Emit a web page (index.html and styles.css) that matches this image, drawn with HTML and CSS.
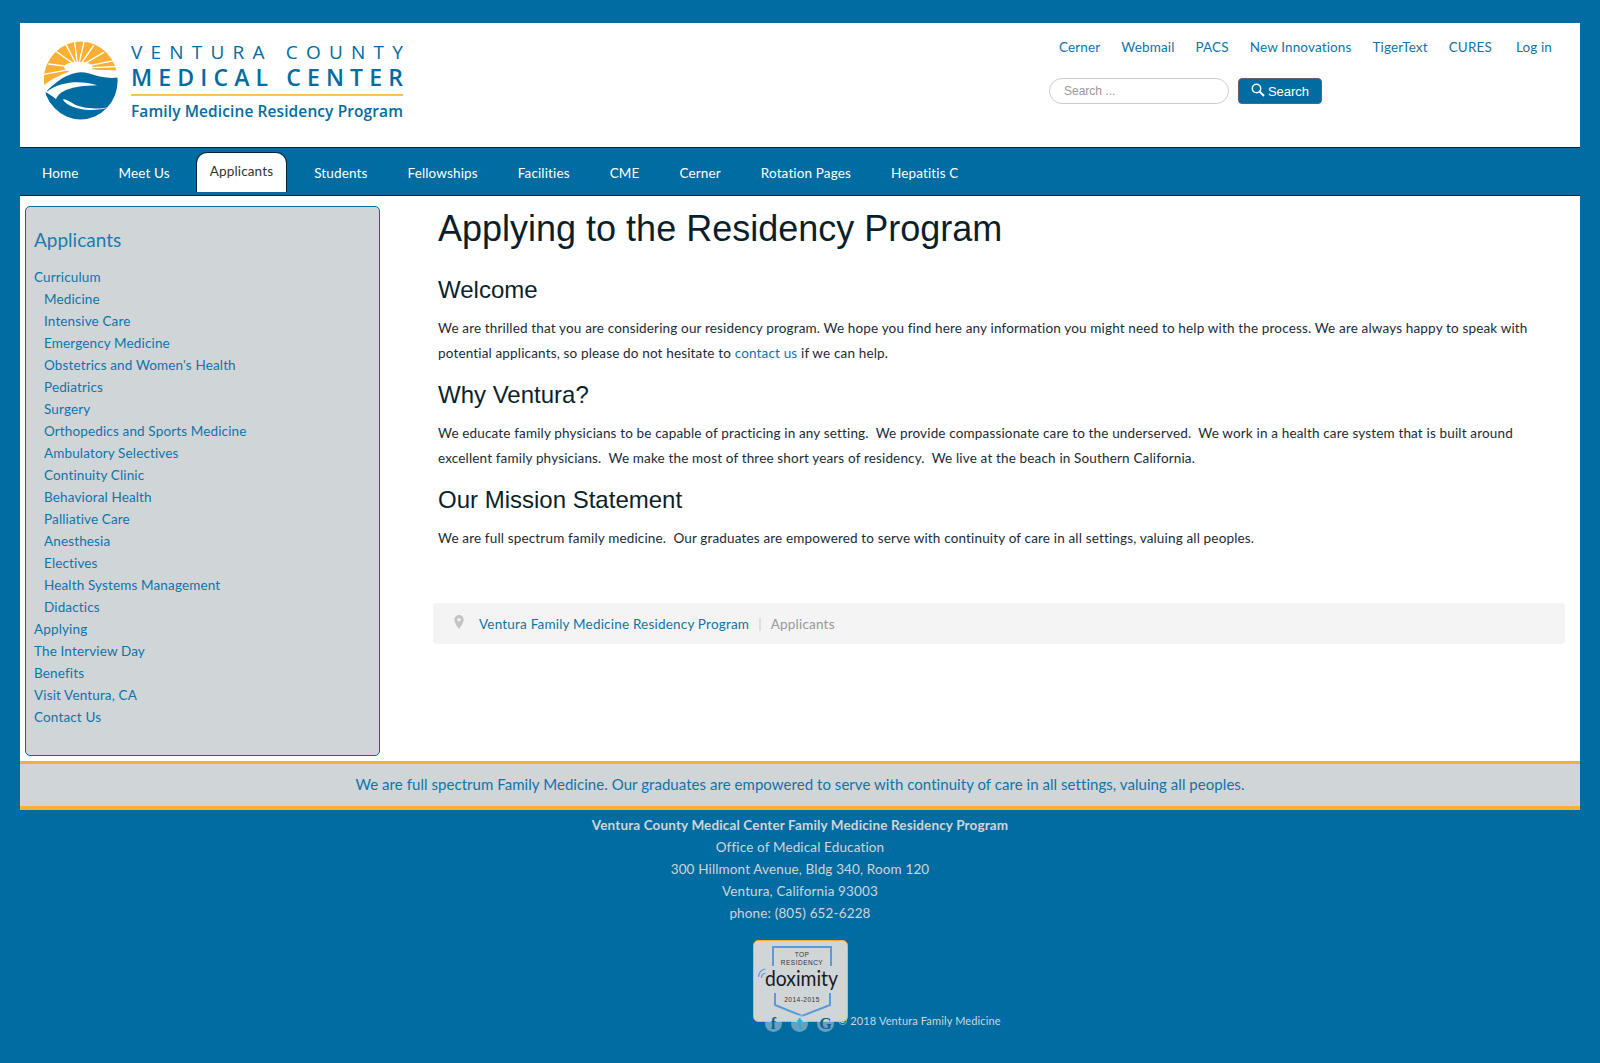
FILE: index.html
```html
<!DOCTYPE html>
<html lang="en">
<head>
<meta charset="utf-8">
<title>Applying to the Residency Program</title>
<link rel="stylesheet" href="styles.css">
</head>
<body>
<div class="wrap">
  <header class="head">
    <a class="logo" href="#">
      <svg width="366" height="84" viewBox="0 0 366 84">
        <defs><clipPath id="disc"><ellipse cx="122" cy="133.500" rx="111" ry="117"/></clipPath></defs>
        <g transform="translate(-4 -4) scale(.3333)">
          <g clip-path="url(#disc)">
            <rect width="250" height="260" fill="#fff"/>
            <path d="M0 158C30 130 60 118 90 106 110 98 130 98 150 100 180 103 210 103 240 104V0H0Z" fill="#fbb034"/>
            <g stroke="#fff" stroke-width="4" stroke-linecap="round">
              <path d="M112 92 48 46M112 92 78 26M113 92 104 18M115 92 132 18M117 92 160 30M119 92 190 50M121 94 222 74M122 96 234 92M105 94 26 84M102 98 8 116"/>
            </g>
            <ellipse cx="115" cy="94" rx="42" ry="17" fill="#fff"/>
            <path d="M14 172C48 134 88 110 122 109 162 110 178 132 240 124V260H0V172Z" fill="#016ca2"/>
            <path d="M0 160C10 166 36 176 48 190 58 166 88 150 172 148 124 134 68 134 22 166Z" fill="#fff"/>
            <path d="M0 164L48 190 40 206 0 188Z" fill="#016ca2"/>
            <path d="M68 190C84 216 142 234 216 212 172 222 122 218 98 202 88 195 78 190 68 190Z" fill="#fff"/>
          </g>
        </g>
        <text class="logo-a" x="87" y="19" textLength="272">VENTURA COUNTY</text>
        <text class="logo-b" x="87" y="46" textLength="272">MEDICAL CENTER</text>
        <rect x="87" y="54" width="272" height="2" fill="#fcc24e"/>
        <text class="logo-c" x="87" y="76.500" textLength="272" lengthAdjust="spacingAndGlyphs">Family Medicine Residency Program</text>
      </svg>
    </a>
    <div class="tools">
      <nav class="toplinks">
        <a href="#">Cerner</a><a href="#">Webmail</a><a href="#">PACS</a><a href="#">New Innovations</a><a href="#">TigerText</a><a href="#">CURES</a><a class="login" href="#">Log in</a>
      </nav>
      <form class="search">
        <input type="text" placeholder="Search ...">
        <button type="button">
          <svg width="14" height="14" viewBox="0 0 14 14" fill="none" stroke="#fff"><circle cx="5.500" cy="5.500" r="4.200" stroke-width="1.500"/><path d="M8.500 8.500 13 13" stroke-width="2"/></svg>
          Search
        </button>
      </form>
    </div>
  </header>

  <nav class="menu">
    <a href="#">Home</a>
    <a href="#">Meet Us</a>
    <a class="active" href="#">Applicants</a>
    <a href="#">Students</a>
    <a href="#">Fellowships</a>
    <a href="#">Facilities</a>
    <a href="#">CME</a>
    <a href="#">Cerner</a>
    <a href="#">Rotation Pages</a>
    <a href="#">Hepatitis C</a>
  </nav>

  <div class="main">
    <aside class="side">
      <h3>Applicants</h3>
      <ul>
        <li><a href="#">Curriculum</a>
          <ul>
            <li><a href="#">Medicine</a></li>
            <li><a href="#">Intensive Care</a></li>
            <li><a href="#">Emergency Medicine</a></li>
            <li><a href="#">Obstetrics and Women's Health</a></li>
            <li><a href="#">Pediatrics</a></li>
            <li><a href="#">Surgery</a></li>
            <li><a href="#">Orthopedics and Sports Medicine</a></li>
            <li><a href="#">Ambulatory Selectives</a></li>
            <li><a href="#">Continuity Clinic</a></li>
            <li><a href="#">Behavioral Health</a></li>
            <li><a href="#">Palliative Care</a></li>
            <li><a href="#">Anesthesia</a></li>
            <li><a href="#">Electives</a></li>
            <li><a href="#">Health Systems Management</a></li>
            <li><a href="#">Didactics</a></li>
          </ul>
        </li>
        <li><a href="#">Applying</a></li>
        <li><a href="#">The Interview Day</a></li>
        <li><a href="#">Benefits</a></li>
        <li><a href="#">Visit Ventura, CA</a></li>
        <li><a href="#">Contact Us</a></li>
      </ul>
    </aside>
    <section class="content">
      <h1>Applying to the Residency Program</h1>
      <h2>Welcome</h2>
      <p>We are thrilled that you are considering our residency program. We hope you find here any information you might need to help with the process. We are always happy to speak with potential applicants, so please do not hesitate to <a href="#">contact us</a> if we can help.</p>
      <h2>Why Ventura?</h2>
      <p>We educate family physicians to be capable of practicing in any setting.&nbsp; We provide compassionate care to the underserved.&nbsp; We work in a health care system that is built around excellent family physicians.&nbsp; We make the most of three short years of residency.&nbsp; We live at the beach in Southern California.</p>
      <h2>Our Mission Statement</h2>
      <p>We are full spectrum family medicine.&nbsp; Our graduates are empowered to serve with continuity of care in all settings, valuing all peoples.</p>
      <div class="crumbs">
        <svg width="10" height="14" viewBox="0 0 10 14"><path d="M5 0a4.700 4.700 0 0 0-4.700 4.700C.3 8 5 14 5 14s4.700-6 4.700-9.300A4.700 4.700 0 0 0 5 0Zm0 6.500a1.800 1.800 0 1 1 0-3.600 1.800 1.800 0 0 1 0 3.600Z" fill="#c4c4c4"/></svg>
        <a href="#">Ventura Family Medicine Residency Program</a>
        <span class="sep">|</span>
        <span class="here">Applicants</span>
      </div>
    </section>
  </div>

  <div class="band">We are full spectrum Family Medicine. Our graduates are empowered to serve with continuity of care in all settings, valuing all peoples.</div>

  <footer class="foot">
    <strong>Ventura County Medical Center Family Medicine Residency Program</strong>
    <div>Office of Medical Education</div>
    <div>300 Hillmont Avenue, Bldg 340, Room 120</div>
    <div>Ventura, California 93003</div>
    <div>phone: (805) 652-6228</div>
    <div class="badgebox">
      <svg class="badge" width="95" height="82" viewBox="0 0 95 82">
        <rect x=".5" y=".5" width="94" height="81" rx="5" fill="#d0d5d8" stroke="#fbb034"/>
        <path d="M20 26V7H78V26" fill="none" stroke="#5b9bd5" stroke-width="2"/>
        <path d="M22 53V65L49 76 77 65V53" fill="none" stroke="#5b9bd5" stroke-width="2"/>
        <text class="b-small" x="49" y="16.500" text-anchor="middle">TOP</text>
        <text class="b-small" x="49" y="24.500" text-anchor="middle">RESIDENCY</text>
        <text class="b-brand" x="12" y="46" textLength="73" lengthAdjust="spacingAndGlyphs">doximity</text>
        <text class="b-small" x="49" y="62" text-anchor="middle">2014-2015</text>
        <path d="M5.500 37a8 8 0 0 1 7-8M8.500 38a5 5 0 0 1 4-5" fill="none" stroke="#5b9bd5" stroke-width="1.200"/>
      </svg>
      <div class="social">
        <span class="soc">f</span><span class="soc t">t</span><span class="soc">G</span>
      </div>
      <div class="copy">© 2018 Ventura Family Medicine</div>
    </div>
  </footer>
</div>
</body>
</html>
```
FILE: styles.css
```css
* { box-sizing: border-box; }
html, body { margin: 0; height: 100%; }
body {
  background: #016ca2;
  font-family: "Lato", "Noto Sans", sans-serif;
  font-size: 13.5px;
  letter-spacing: .14px;
  color: #1a2b36;
}
a { color: #0f74a8; text-decoration: none; }
.wrap { padding: 23px 20px 0; }

.head {
  background: #fff;
  height: 124px;
  display: flex;
  justify-content: space-between;
}
.logo { display: block; margin: 17px 0 0 24px; height: 84px; }
.logo svg { display: block; }
.logo-a { font: 400 19px "Open Sans", sans-serif; fill: #016ca2; }
.logo-b { font: 600 23px "Open Sans", sans-serif; fill: #016ca2; }
.logo-c { font: 600 17px "Open Sans", sans-serif; fill: #016ca2; }

.tools { width: 531px; padding-top: 16px; }
.toplinks { display: flex; padding-left: 10px; height: 16px; line-height: 16px; }
.toplinks a { margin-right: 21px; white-space: nowrap; }
.toplinks .login { margin-left: 3px; margin-right: 0; }
.search { display: flex; align-items: center; gap: 9px; margin-top: 23px; letter-spacing: 0; }
.search input {
  width: 180px; height: 26px;
  border: 1px solid #ccc; border-radius: 13px;
  padding: 0 14px;
  font: 12px "Liberation Sans", sans-serif;
  outline: 0;
}
.search input::placeholder { color: #999; opacity: 1; }
.search button {
  width: 84px; height: 26px;
  background: #016ca2; color: #fff;
  border: 1px solid #6f5a68; border-radius: 4px;
  font: 13px "Liberation Sans", sans-serif;
  padding: 0;
  display: flex; align-items: center; justify-content: center; gap: 3px;
}
.search button svg { margin-top: -3px; }

.menu {
  height: 49px;
  background: #016ca2;
  border-top: 1px solid #06263a;
  border-bottom: 1px solid #06263a;
  display: flex;
  padding: 4px 0 0 2px;
}
.menu a {
  color: #fff;
  padding: 0 20px;
  line-height: 43px;
  height: 40px;
  white-space: nowrap;
}
.menu .active {
  background: #fff;
  color: #333;
  border: 1px solid #06263a;
  border-bottom: 0;
  border-radius: 11px 11px 0 0;
  padding: 0 13px;
  margin: 0 7px 0 6px;
  line-height: 36px;
}

.main { background: #fff; display: flex; height: 565px; padding: 10px 15px 0 5px; }
.side {
  flex: none;
  width: 355px; height: 550px;
  background: #d0d5d8;
  border: 1px solid #016ca2;
  border-radius: 5px;
  padding: 20px 8px;
}
.side h3 {
  margin: 0 0 13px;
  font-size: 19px; font-weight: 400;
  line-height: 26px;
  letter-spacing: 0;
  color: #1a7cad;
}
.side ul { list-style: none; margin: 0; padding: 0; }
.side ul ul { padding-left: 10px; }
.side li { line-height: 22px; }

.content { flex: 1; min-width: 0; padding-left: 58px; }
h1, h2 { font-family: "Liberation Sans", sans-serif; font-weight: 400; color: #0b1f2b; margin: 0; letter-spacing: 0; }
h1 { font-size: 36px; line-height: 44px; margin-top: 1px; }
h2 { font-size: 24px; line-height: 30px; }
.content h1 + h2 { margin-top: 24px; }
.content p { margin: 11px 0 0; line-height: 25px; letter-spacing: .16px; }
.content p + h2 { margin-top: 14px; }

.crumbs {
  margin: 52px 0 0 -5px;
  height: 41px;
  background: #f4f4f4;
  border-radius: 4px;
  display: flex; align-items: center;
  padding-left: 21px;
  letter-spacing: .2px;
}
.crumbs svg { margin: -3px 15px 0 0; }
.sep { color: #ccc; margin: 0 9px; }
.here { color: #999; }

.band {
  height: 49px;
  background: #d0d5d8;
  border-top: 3px solid #fbb034;
  border-bottom: 4px solid #fbb034;
  text-align: center;
  line-height: 41px;
  font-size: 15px;
  letter-spacing: .05px;
  color: #0f74a8;
}

.foot { color: #d0d5d8; text-align: center; line-height: 22px; padding-top: 4px; }
.foot strong { font-weight: 700; display: block; }
.badgebox { position: relative; height: 82px; margin-top: 16px; }
.badge { display: block; margin: 0 auto; }
.b-small { font: 6.500px "Liberation Sans", sans-serif; fill: #333; letter-spacing: .5px; }
.b-brand { font: 22px "Lato", sans-serif; fill: #1a1a1a; letter-spacing: 0; }
.social { position: absolute; left: 745px; top: 75px; display: flex; gap: 9px; }
.soc {
  width: 17px; height: 17px; border-radius: 50%;
  background: rgba(208, 213, 216, .5);
  color: #0f5f9c;
  font: 700 16px/17px "Liberation Serif", serif;
  text-align: center;
  letter-spacing: 0;
}
.soc.t { color: #35a7d0; font: 700 17px/17px "Liberation Sans", sans-serif; }
.copy { position: absolute; left: 818px; top: 70px; font-size: 11px; line-height: 22px; letter-spacing: .14px; white-space: nowrap; }
```
